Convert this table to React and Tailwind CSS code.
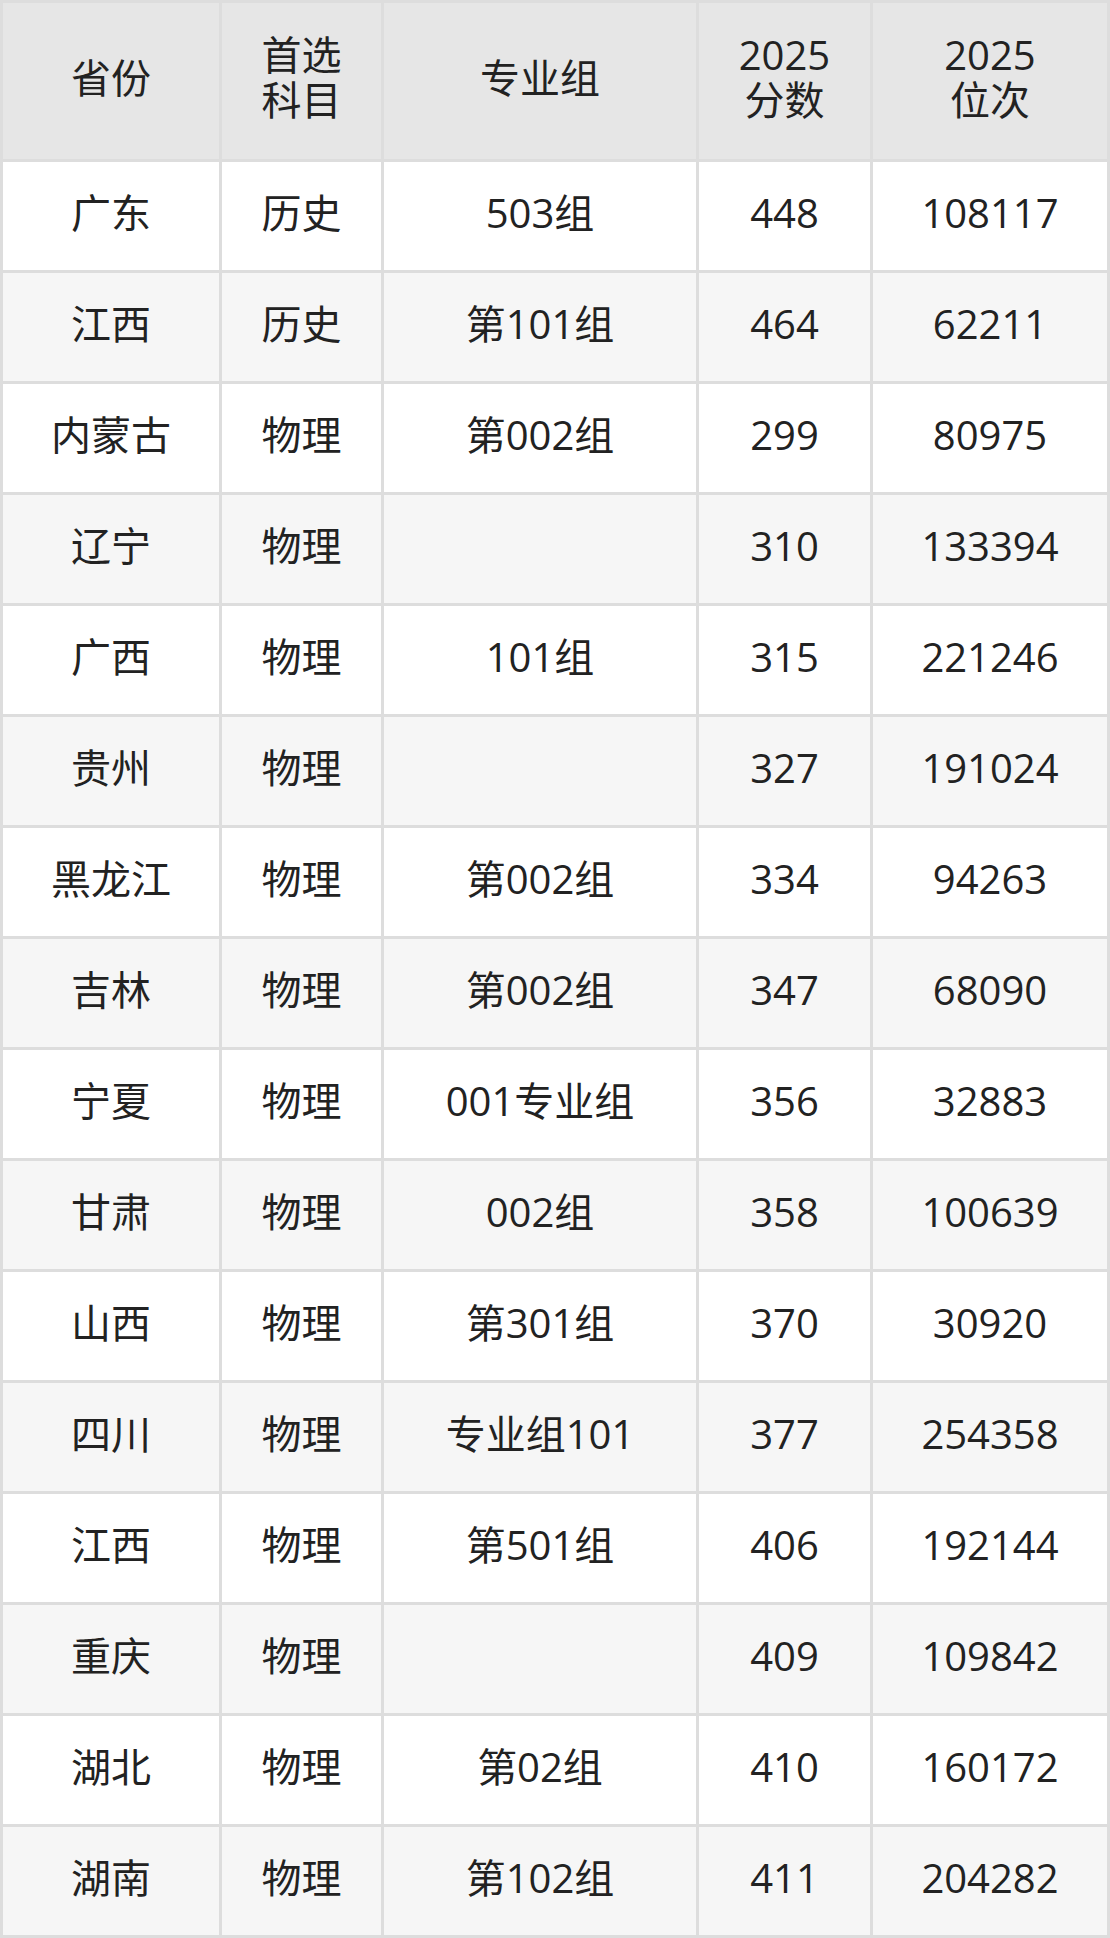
import React from "react";

const rows = [
  ["广东", "历史", "503组", "448", "108117"],
  ["江西", "历史", "第101组", "464", "62211"],
  ["内蒙古", "物理", "第002组", "299", "80975"],
  ["辽宁", "物理", "", "310", "133394"],
  ["广西", "物理", "101组", "315", "221246"],
  ["贵州", "物理", "", "327", "191024"],
  ["黑龙江", "物理", "第002组", "334", "94263"],
  ["吉林", "物理", "第002组", "347", "68090"],
  ["宁夏", "物理", "001专业组", "356", "32883"],
  ["甘肃", "物理", "002组", "358", "100639"],
  ["山西", "物理", "第301组", "370", "30920"],
  ["四川", "物理", "专业组101", "377", "254358"],
  ["江西", "物理", "第501组", "406", "192144"],
  ["重庆", "物理", "", "409", "109842"],
  ["湖北", "物理", "第02组", "410", "160172"],
  ["湖南", "物理", "第102组", "411", "204282"],
];

const headers = [["省份"], ["首选", "科目"], ["专业组"], ["2025", "分数"], ["2025", "位次"]];

export default function App() {
  return (
    <div
      className="w-[1110px] bg-white text-[#222222]"
      style={{ fontFamily: '"Open Sans", "Noto Sans CJK SC", sans-serif' }}
    >
      <div className="grid grid-cols-[216px_159px_312px_171px_234px] grid-rows-[156px_repeat(16,108px)] gap-[3px] bg-[#dddddd] p-[3px] text-[40px]">
        {headers.map((h, i) => (
          <div
            key={"h" + i}
            className="bg-[#e6e6e6] flex flex-col items-center justify-center leading-[45px] pb-[8px]"
          >
            {h.map((t, j) => (
              <span key={j}>{t}</span>
            ))}
          </div>
        ))}
        {rows.map((r, ri) =>
          r.map((c, ci) => (
            <div
              key={ri + "-" + ci}
              className={
                "flex items-center justify-center leading-none pb-[7px] " +
                (ri % 2 === 1 ? "bg-[#f6f6f6]" : "bg-white")
              }
            >
              {c}
            </div>
          ))
        )}
      </div>
    </div>
  );
}
